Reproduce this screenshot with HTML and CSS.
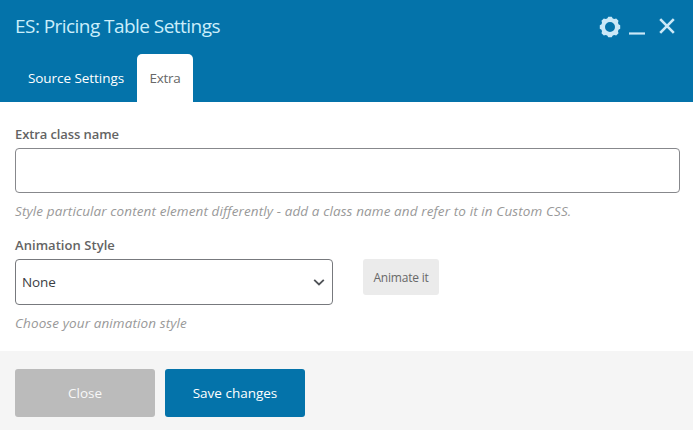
FILE: index.html
```html
<!DOCTYPE html>
<html lang="en">
<head>
<meta charset="utf-8">
<title>ES: Pricing Table Settings</title>
<link rel="stylesheet" href="styles.css">
</head>
<body>
<div class="panel">
  <header class="header">
    <div class="titlebar">
      <h1 class="title">ES: Pricing Table Settings</h1>
      <div class="controls">
        <svg class="gear" width="22" height="22" viewBox="-11 -11 22 22" aria-hidden="true">
          <path fill-rule="evenodd" d="M-1.7-10.2H1.7L2.8-8.5 4.3-8 6.2-8.5 8.5-6.2 8-4.3 8.5-2.8 10.2-1.7V1.7L8.5 2.8 8 4.3 8.5 6.2 6.2 8.5 4.3 8 2.8 8.5 1.7 10.2H-1.7L-2.8 8.5-4.3 8-6.2 8.5-8.5 6.2-8 4.3-8.5 2.8-10.2 1.7V-1.7L-8.5-2.8-8-4.3-8.5-6.2-6.2-8.5-4.3-8-2.8-8.5ZM0-5A5 5 0 1 0 0 5 5 5 0 1 0 0-5Z"/>
        </svg>
        <svg class="minimize" width="16" height="22" viewBox="0 0 16 22" aria-hidden="true"><path d="M0 17.5h16"/></svg>
        <svg class="close" width="16" height="22" viewBox="0 0 16 22" aria-hidden="true"><path d="M1.2 3.2 14.8 16.8M14.8 3.2 1.2 16.8"/></svg>
      </div>
    </div>
    <nav class="tabs">
      <a class="tab tab-source">Source Settings</a>
      <a class="tab tab-active">Extra</a>
    </nav>
  </header>
  <main class="content">
    <div class="field">
      <label class="label label-class" for="cls">Extra class name</label>
      <input class="input" id="cls" type="text">
      <p class="hint hint-class">Style particular content element differently - add a class name and refer to it in Custom CSS.</p>
    </div>
    <div class="field">
      <span class="label label-animation">Animation Style</span>
      <div class="row">
        <div class="select"><span class="value">None</span>
          <svg width="12" height="8" viewBox="0 0 12 8" aria-hidden="true"><path d="M1.2 1.8 6 6.5 10.8 1.8"/></svg>
        </div>
        <button class="animate" type="button">Animate it</button>
      </div>
      <p class="hint hint-animation">Choose your animation style</p>
    </div>
  </main>
  <footer class="footer">
    <button class="button button-close" type="button">Close</button>
    <button class="button button-save" type="button">Save changes</button>
  </footer>
</div>
</body>
</html>
```
FILE: styles.css
```css
* { box-sizing: border-box; }
body { margin: 0; font-family: "Open Sans", "Noto Sans", sans-serif; }
button { border: 0; padding: 0; font-family: inherit; }
.panel { display: flex; flex-direction: column; height: 430px; background: #fff; overflow: hidden; }
.header { height: 102px; background: #0473aa; }
.titlebar { display: flex; justify-content: space-between; align-items: center; height: 54px; padding: 0 18px 0 15px; }
.title { margin: 0 0 2px; font-size: 19px; font-weight: 400; line-height: 24px; color: #cbeefb; white-space: nowrap; letter-spacing: -0.55px; }
.controls { display: flex; align-items: center; }
.controls svg { fill: none; stroke: #cbe8f7; stroke-width: 2.6; }
.controls .gear { margin-bottom: 1px; fill: #cbe8f7; stroke: none; }
.controls .minimize { stroke-width: 2.2; }
.minimize { margin-left: 8px; }
.close { margin-left: 14px; }
.tabs { display: flex; height: 48px; padding-left: 15px; }
.tab { display: flex; align-items: center; justify-content: center; height: 48px; font-size: 13.5px; color: #fff; white-space: nowrap; }
.tab-source { width: 122px; letter-spacing: -0.05px; }
.tab-active { width: 56px; border-radius: 5px 5px 0 0; background: #fff; color: #686868; letter-spacing: -0.3px; }
.content { flex: 1; padding: 23px 13px 0 15px; }
.label { display: block; height: 18px; margin-bottom: 5px; font-size: 13px; font-weight: 600; line-height: 18px; color: #646464; white-space: nowrap; }
.label-class { letter-spacing: -0.1px; }
.label-animation { letter-spacing: 0.05px; }
.input { display: block; width: 100%; height: 45px; border: 1px solid #87888c; border-radius: 4px; background: #fff; }
.hint { margin: 8px 0 0; height: 20px; font-size: 13.5px; font-style: italic; line-height: 20px; color: #999; white-space: nowrap; letter-spacing: 0.11px; }
.hint-class { margin-bottom: 15px; }
.row { display: flex; align-items: flex-start; gap: 30px; }
.select { display: flex; align-items: center; justify-content: space-between; width: 318px; height: 46px; padding: 0 7px 0 6px; border: 1px solid #77797d; border-radius: 4px; font-size: 13.5px; color: #3c4044; }
.value { letter-spacing: -0.1px; }
.select svg { fill: none; stroke: #505358; stroke-width: 1.8; }
.animate { width: 76px; height: 36px; border-radius: 3px; background: #ebebeb; color: #686868; font-size: 12px; letter-spacing: -0.2px; }
.footer { display: flex; gap: 10px; height: 79px; padding: 18px 15px; background: #f5f5f5; }
.button { width: 140px; height: 48px; border-radius: 3px; font-size: 13.5px; color: #fff; }
.button-close { background: #bbb; color: #f8f8f8; }
.button-save { background: #0473aa; }
```
